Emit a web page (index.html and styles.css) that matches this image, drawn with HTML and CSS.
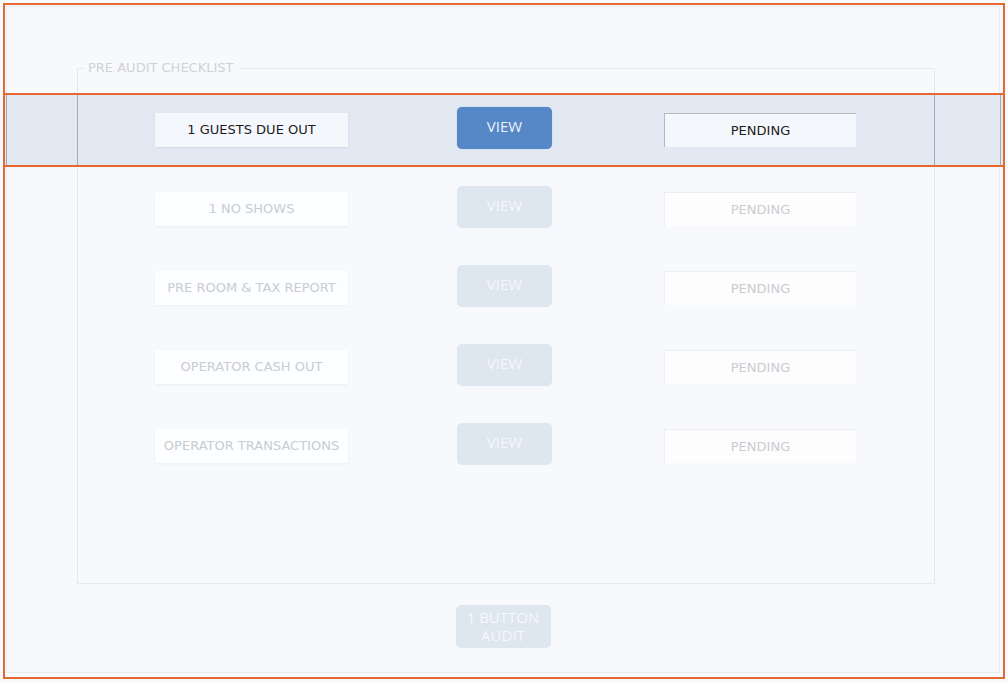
FILE: index.html
```html
<!DOCTYPE html>
<html>
<head>
<meta charset="utf-8">
<link rel="stylesheet" href="styles.css">
</head>
<body>
<div class="frame">
  <div class="inner">
    <fieldset class="checklist">
      <legend class="legend">PRE AUDIT CHECKLIST</legend>
      <div class="row active">
        <div class="label">1 GUESTS DUE OUT</div>
        <div class="view">VIEW</div>
        <div class="status">PENDING</div>
      </div>
      <div class="row">
        <div class="label">1 NO SHOWS</div>
        <div class="view">VIEW</div>
        <div class="status">PENDING</div>
      </div>
      <div class="row">
        <div class="label">PRE ROOM &amp; TAX REPORT</div>
        <div class="view">VIEW</div>
        <div class="status">PENDING</div>
      </div>
      <div class="row">
        <div class="label">OPERATOR CASH OUT</div>
        <div class="view">VIEW</div>
        <div class="status">PENDING</div>
      </div>
      <div class="row">
        <div class="label">OPERATOR TRANSACTIONS</div>
        <div class="view">VIEW</div>
        <div class="status">PENDING</div>
      </div>
    </fieldset>
    <div class="footer">
      <div class="audit">1 BUTTON<br>AUDIT</div>
    </div>
  </div>
</div>
<div class="band"></div>
</body>
</html>
```

FILE: styles.css
```css
html, body {
  margin: 0;
  padding: 0;
  background: #f8f9fc;
  font-family: "DejaVu Sans", Verdana, sans-serif;
}

.frame {
  margin: 3px;
  width: 1002px;
  height: 676px;
  box-sizing: border-box;
  border: 2px solid #e4682f;
  padding: 1px 3px 4px 1px;
}

.inner {
  height: 100%;
  box-sizing: border-box;
  border: 1px solid #e9ecf1;
  display: flex;
  flex-direction: column;
}

.checklist {
  margin: 53px 64px 0 70px;
  padding: 14px 0 0 0;
  height: 524px;
  box-sizing: border-box;
  border: 1px solid #e6e9ed;
  min-width: 0;
}

.legend {
  font-size: 13px;
  line-height: 16px;
  color: #cfd2d7;
  padding: 0 6px 0 4px;
  margin-left: 6px;
}

.row {
  height: 79px;
  padding-left: 77px;
  display: flex;
  align-items: center;
  position: relative;
  z-index: 1;
}

.label {
  width: 193px;
  height: 34px;
  box-sizing: border-box;
  display: flex;
  align-items: center;
  justify-content: center;
  font-size: 13px;
  color: #c9ccd1;
  background: #fdfeff;
  box-shadow: 0 1px 2px rgba(215, 222, 232, 0.35);
}

.view {
  width: 95px;
  height: 42px;
  margin-left: 109px;
  margin-bottom: 4px;
  border-radius: 5px;
  display: flex;
  align-items: center;
  justify-content: center;
  font-family: "Open Sans", sans-serif;
  font-size: 15px;
  color: #f5f8fc;
  background: #dee6f0;
  padding-bottom: 3px;
  box-sizing: border-box;
}

.status {
  width: 192px;
  height: 34px;
  margin-left: 112px;
  box-sizing: border-box;
  display: flex;
  align-items: center;
  justify-content: center;
  font-size: 13px;
  color: #c9ccd1;
  background: #fdfdfe;
  border-top: 1px solid #eceef2;
  border-left: 1px solid #eceef2;
}

.row.active .label {
  background: #f4f7fc;
  color: #1c1c1e;
  box-shadow: 0 1px 2px rgba(190, 200, 215, 0.5);
}

.row.active .view {
  background: #5687c6;
  color: #eef3fa;
  box-shadow: 0 0 1px rgba(60, 100, 160, 0.5);
}

.row.active .status {
  background: #f4f7fc;
  color: #1c1c1e;
  border-top: 1px solid #b4b9c1;
  border-left: 1px solid #b4b9c1;
}

.footer {
  display: flex;
  justify-content: center;
  margin-top: 21px;
}

.audit {
  width: 95px;
  height: 43px;
  border-radius: 5px;
  background: #dee6f0;
  color: #f5f8fc;
  font-family: "Open Sans", sans-serif;
  font-size: 15px;
  line-height: 18px;
  text-align: center;
  display: flex;
  align-items: center;
  justify-content: center;
  padding-bottom: 2px;
  box-sizing: border-box;
}

.band {
  position: absolute;
  left: 3px;
  top: 93px;
  width: 1002px;
  height: 74px;
  box-sizing: border-box;
  border: 2px solid #e4682f;
  background-color: #e3e9f3;
  background-image:
    linear-gradient(#a4acb7, #a4acb7),
    linear-gradient(#a4acb7, #a4acb7),
    linear-gradient(#a4acb7, #a4acb7),
    linear-gradient(#a4acb7, #a4acb7);
  background-size: 1px 100%;
  background-repeat: no-repeat;
  background-position: 1px 0, 72px 0, 929px 0, 995px 0;
  z-index: 0;
}
```
